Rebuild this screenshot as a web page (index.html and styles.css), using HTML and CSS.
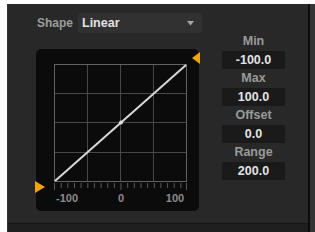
FILE: index.html
```html
<!DOCTYPE html>
<html lang="en">
<head>
    <meta charset="UTF-8">
    <title>Shape Editor</title>
    <link rel="stylesheet" href="styles.css">
</head>
<body>
    <div class="window">
        <div class="panel-col">
            <div class="panel">
                <div class="left">
                    <div class="shape-row">
                        <span class="shape-label">Shape</span>
                        <div class="dropdown">
                            <span>Linear</span>
                            <svg class="arrow" width="7" height="5" viewBox="0 0 7 5"><polygon points="0,0 7,0 3.5,4.5" fill="#a8a8a8"/></svg>
                        </div>
                    </div>
                    <div class="graph">
                        <svg width="163" height="162" viewBox="0 0 163 162">
                            <g stroke="#484848" stroke-width="1">
                                <line x1="51.5" y1="15" x2="51.5" y2="132"/>
                                <line x1="84.5" y1="15" x2="84.5" y2="132"/>
                                <line x1="117.5" y1="15" x2="117.5" y2="132"/>
                                <line x1="18" y1="44.5" x2="151" y2="44.5"/>
                                <line x1="18" y1="73.5" x2="151" y2="73.5"/>
                                <line x1="18" y1="103.5" x2="151" y2="103.5"/>
                            </g>
                            <rect x="18.5" y="15.5" width="132" height="117" fill="none" stroke="#626262"/>
                            <g stroke="#5a5a5a" stroke-width="1">
                                <line x1="18.5" y1="134" x2="18.5" y2="141"/>
                                <line x1="25.2" y1="134" x2="25.2" y2="139"/>
                                <line x1="31.8" y1="134" x2="31.8" y2="139"/>
                                <line x1="38.5" y1="134" x2="38.5" y2="139"/>
                                <line x1="45.1" y1="134" x2="45.1" y2="139"/>
                                <line x1="51.8" y1="134" x2="51.8" y2="139"/>
                                <line x1="58.4" y1="134" x2="58.4" y2="139"/>
                                <line x1="65.1" y1="134" x2="65.1" y2="139"/>
                                <line x1="71.7" y1="134" x2="71.7" y2="139"/>
                                <line x1="78.4" y1="134" x2="78.4" y2="139"/>
                                <line x1="85" y1="134" x2="85" y2="141"/>
                                <line x1="91.7" y1="134" x2="91.7" y2="139"/>
                                <line x1="98.3" y1="134" x2="98.3" y2="139"/>
                                <line x1="105" y1="134" x2="105" y2="139"/>
                                <line x1="111.6" y1="134" x2="111.6" y2="139"/>
                                <line x1="118.3" y1="134" x2="118.3" y2="139"/>
                                <line x1="124.9" y1="134" x2="124.9" y2="139"/>
                                <line x1="131.6" y1="134" x2="131.6" y2="139"/>
                                <line x1="138.2" y1="134" x2="138.2" y2="139"/>
                                <line x1="144.9" y1="134" x2="144.9" y2="139"/>
                                <line x1="150.5" y1="134" x2="150.5" y2="141"/>
                            </g>
                            <line x1="19" y1="132" x2="150" y2="16" stroke="#d8d8d8" stroke-width="2"/>
                            <circle cx="85" cy="73.5" r="2" fill="#e0e0e0"/>
                            <g class="axis">
                                <text x="31" y="153" text-anchor="middle">-100</text>
                                <text x="85" y="153" text-anchor="middle">0</text>
                                <text x="139" y="153" text-anchor="middle">100</text>
                            </g>
                            <polygon points="-1,132 9,138 -1,144" fill="#f0a412"/>
                            <polygon points="164,3 156,9 164,15" fill="#f0a412"/>
                        </svg>
                    </div>
                </div>
                <div class="side">
                    <div class="label">Min</div>
                    <div class="field">-100.0</div>
                    <div class="label">Max</div>
                    <div class="field">100.0</div>
                    <div class="label">Offset</div>
                    <div class="field">0.0</div>
                    <div class="label">Range</div>
                    <div class="field">200.0</div>
                </div>
            </div>
            <div class="foot"></div>
        </div>
        <div class="edge"></div>
        <div class="rim"></div>
    </div>
</body>
</html>
```

FILE: styles.css
```css
body {
    margin: 0;
    background-color: #fdfdfd;
    font-family: 'Liberation Sans', Arial, sans-serif;
}
.window {
    display: flex;
    margin: 4px 0 0 7px;
    height: 228px;
}
.panel-col {
    display: flex;
    flex-direction: column;
    width: 301px;
    background-color: #282828;
    border-left: 1px solid #333;
    box-sizing: border-box;
}
.panel {
    display: flex;
    flex: 1;
    padding-top: 9px;
}
.left {
    padding-left: 28px;
    width: 166px;
}
.shape-row {
    display: flex;
    align-items: center;
    height: 20px;
    margin-left: 1px;
}
.shape-label {
    font-size: 12px;
    font-weight: bold;
    color: #9c9c9c;
    width: 41px;
}
.dropdown {
    display: flex;
    align-items: center;
    justify-content: space-between;
    width: 124px;
    height: 20px;
    padding: 0 8px 0 4px;
    box-sizing: border-box;
    background-color: #313131;
    border-radius: 2px;
    font-size: 12.5px;
    font-weight: bold;
    color: #e2e2e2;
}
.arrow {
    display: block;
}
.graph {
    margin-top: 16px;
    width: 163px;
    height: 162px;
    background-color: #0b0b0b;
    border-radius: 5px;
}
.graph svg {
    display: block;
    overflow: visible;
}
.axis text {
    font-family: 'Liberation Sans', Arial, sans-serif;
    font-size: 11px;
    font-weight: bold;
    fill: #8c8c8c;
}
.side {
    margin-left: 20px;
    margin-top: 19px;
    width: 63px;
    text-align: center;
}
.label {
    height: 19px;
    line-height: 19px;
    font-size: 12.5px;
    font-weight: bold;
    color: #9a9a9a;
}
.field {
    height: 18px;
    line-height: 18px;
    background-color: #1a1a1a;
    font-size: 12.5px;
    font-weight: bold;
    color: #e4e4e4;
}
.foot {
    height: 8px;
    background-color: #1f1f1f;
    border-top: 1px solid #141414;
}
.edge {
    width: 2px;
    background-color: #0c0c0c;
}
.rim {
    flex: 1;
    background-color: #343434;
}
```
